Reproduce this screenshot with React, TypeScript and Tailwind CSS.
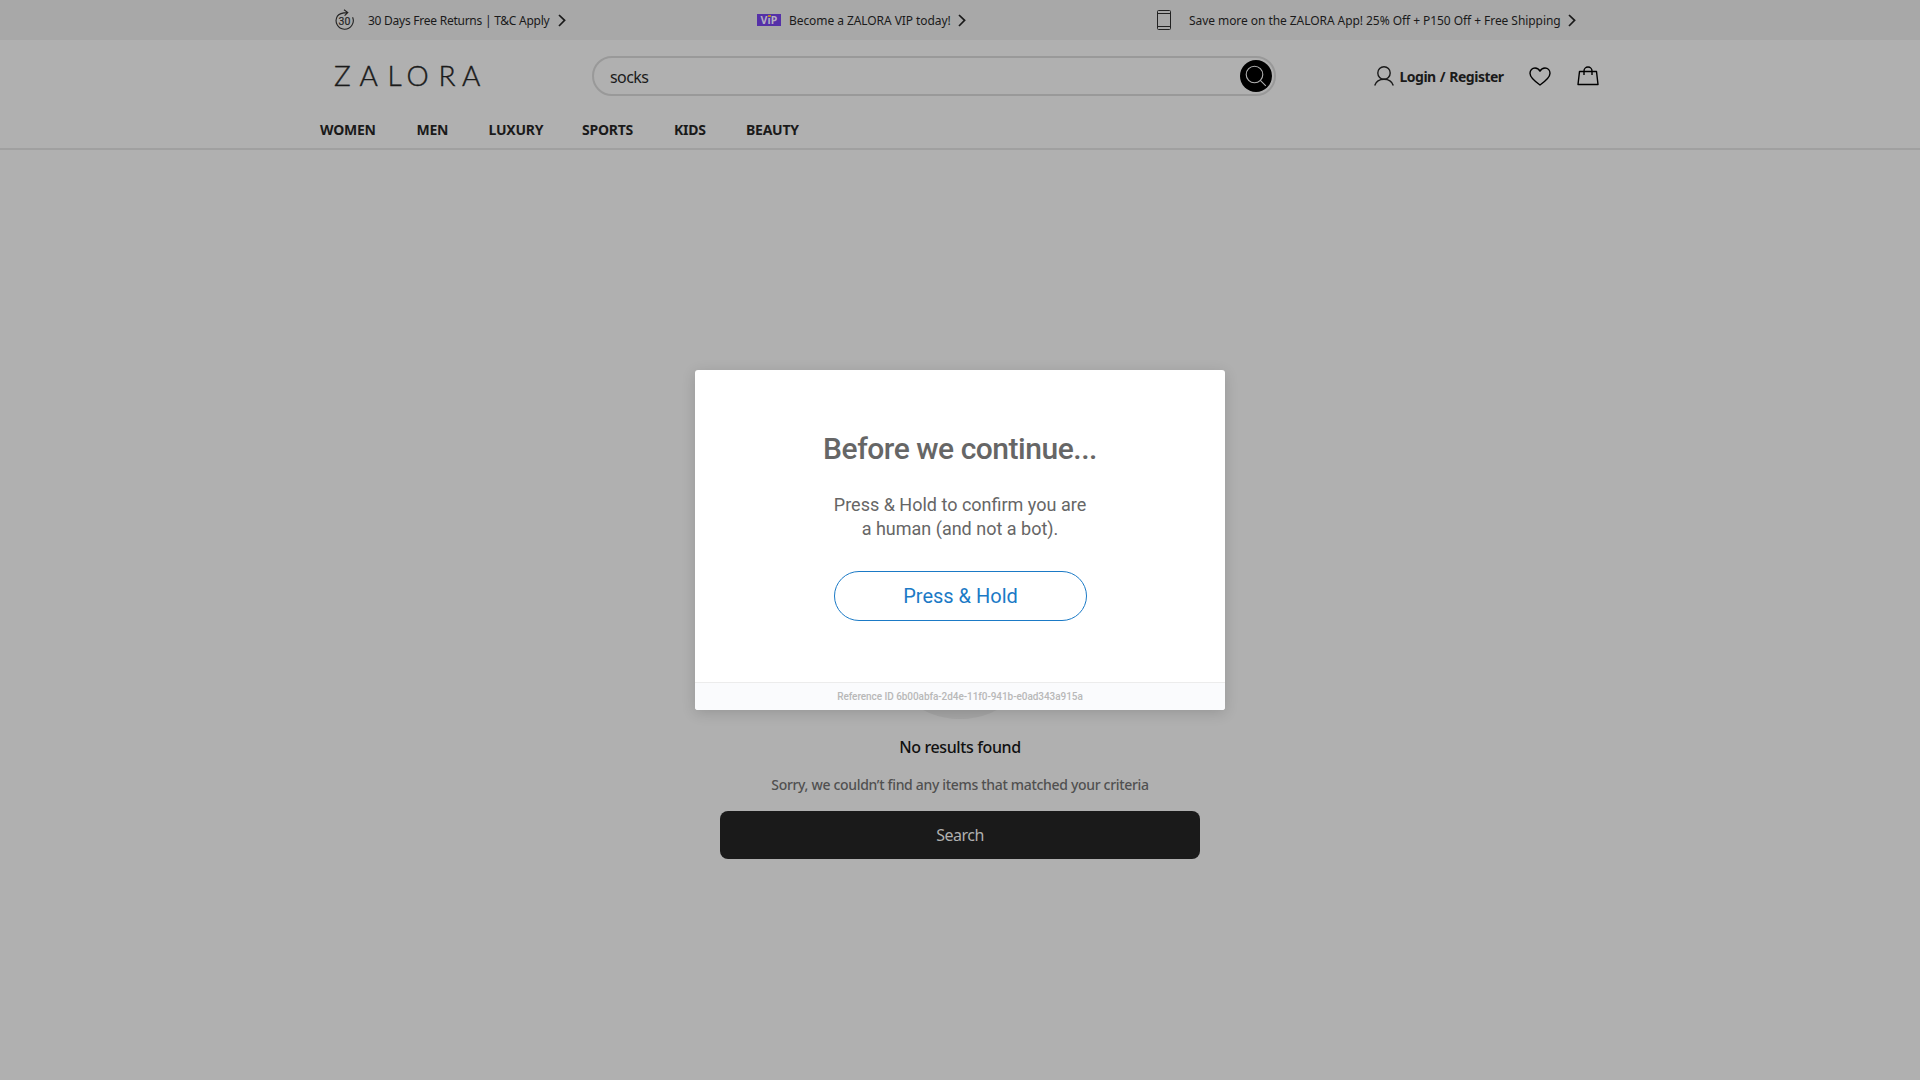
import React from "react";

const Chevron = () => (
  <svg width="8" height="13" viewBox="0 0 8 13" fill="none" stroke="#1a1a1a" strokeWidth="1.7" className="shrink-0">
    <path d="M1 1l5.6 5.3L1 12" />
  </svg>
);

const ReturnsIcon = () => (
  <svg width="20" height="22" viewBox="0 0 20 22" fill="none" stroke="#222" strokeWidth="1.1">
    <path d="M17.6 8.2A8.6 8.6 0 1 1 2.2 7.4C3.8 4.8 6.5 3.6 12.5 3.6M9 .7l3.8 2.9L9.6 6.6" />
    <text x="9.5" y="15.5" textAnchor="middle" fontSize="10.5" fill="#222" stroke="#222" strokeWidth="0.15" fontFamily="Roboto, sans-serif">30</text>
  </svg>
);

const nav = [
  { label: "WOMEN", box: "w-[96.5px]" },
  { label: "MEN", box: "w-[72px]" },
  { label: "LUXURY", box: "w-[93.5px]" },
  { label: "SPORTS", box: "w-[92px]" },
  { label: "KIDS", box: "w-[72px]" },
  { label: "BEAUTY", box: "w-[60px]" },
];

const TopBar = () => (
  <div className="h-10 bg-[#a8a8a8] text-[12px] text-[#1a1a1a] whitespace-nowrap">
    <div className="flex h-10 items-center pl-[335px]">
      <div className="flex w-[422px] items-center">
        <div className="w-[33px]"><ReturnsIcon /></div>
        <span className="w-[190px] pt-[2px] tracking-[-0.25px]">30 Days Free Returns | T&amp;C Apply</span>
        <Chevron />
      </div>
      <div className="flex w-[400px] items-center">
        <div className="mr-2 flex h-3 w-6 items-center justify-center bg-[#5530a8] text-[10.5px] font-bold leading-3 tracking-[0.2px] text-[#b5b0c0]">
          <span>V</span>
          <span className="relative">ı<i className="absolute left-[1px] top-[1px] h-[2px] w-[3px] bg-[#b08a28]" /></span>
          <span>P</span>
        </div>
        <span className="w-[169px] pt-[2px] tracking-[-0.07px]">Become a ZALORA VIP today!</span>
        <Chevron />
      </div>
      <svg width="14" height="20" viewBox="0 0 14 20" fill="none" stroke="#222" className="mr-[18px]">
        <rect x=".5" y=".5" width="13" height="19" rx="1" /><path d="M1 3.5h12M1 16.5h12" />
      </svg>
      <span className="w-[379px] pt-[2px] tracking-[-0.06px]">Save more on the ZALORA App! 25% Off + P150 Off + Free Shipping</span>
      <Chevron />
    </div>
  </div>
);

const Header = () => (
  <header className="h-[110px] border-b-2 border-[#a0a0a0] text-[#1a1a1a]">
    <div className="flex h-[72px] items-center pl-[334px]">
      <div className="flex h-8 w-[258px] items-center pb-[2px] font-[Lato] text-[28px] font-light leading-8 [-webkit-text-stroke:0.4px_#1a1a1a]">
        <span className="w-[25.5px]">Z</span><span className="w-[28px]">A</span><span className="w-[19px]">L</span>
        <span className="w-[32px]">O</span><span className="w-[23.5px]">R</span><span>A</span>
      </div>
      <div className="flex h-10 w-[684px] items-center justify-between rounded-full border-2 border-[#999] pl-4 pr-[2px]">
        <span className="pt-px text-[16px] tracking-[-0.55px]">socks</span>
        <span className="flex h-8 w-8 items-center justify-center rounded-full bg-black">
          <svg width="22" height="22" viewBox="0 0 22 22" fill="none" stroke="#b0b0b0" strokeWidth="1.1">
            <circle cx="9.5" cy="9.5" r="8.3" /><path d="M15.3 15.3l5.5 5.5" />
          </svg>
        </span>
      </div>
      <svg width="20" height="20" viewBox="0 0 20 20" fill="none" stroke="#1a1a1a" strokeWidth="1.4" className="ml-[98px] mr-[5.5px]">
        <circle cx="10" cy="7" r="6.2" /><path d="M.7 19.500C2 15.500 5.500 13.200 10 13.200s8 2.300 9.300 6.300" />
      </svg>
      <span className="w-[129.5px] whitespace-nowrap text-[14px] font-bold tracking-[-0.5px] [word-spacing:1px]">Login / Register</span>
      <svg width="22" height="19" viewBox="0 0 22 19" fill="none" stroke="#000" strokeWidth="1.4" strokeLinejoin="round">
        <path d="M11 18C6.500 14.800 1 11 1 6.300 1 3.200 3.200 1 6 1c2.200 0 4 1.200 5 3.200C12 2.200 13.800 1 16 1c2.800 0 5 2.200 5 5.300C21 11 15.500 14.800 11 18z" />
      </svg>
      <svg width="22" height="20" viewBox="0 0 22 20" fill="none" stroke="#000" strokeWidth="1.4" strokeLinejoin="round" className="ml-[26px]">
        <path d="M2.500 5.500h17L21 18.500H1zM7 9V5a4 4 0 0 1 8 0v4" />
      </svg>
    </div>
    <nav className="flex h-[34px] items-center pl-[320px] text-[14px] font-bold tracking-[-0.25px]">
      {nav.map((n) => <span key={n.label} className={n.box}>{n.label}</span>)}
    </nav>
  </header>
);

const Empty = () => (
  <main className="flex flex-col items-center pt-[409px]">
    <div className="h-40 w-40 rounded-full bg-[#a6a6a6]" />
    <h2 className="mt-[16px] text-[16px] font-medium leading-6 tracking-[-0.38px] text-[#111]">No results found</h2>
    <p className="mt-[14px] text-[14px] font-medium leading-6 tracking-[-0.32px] text-[#505050]">Sorry, we couldn’t find any items that matched your criteria</p>
    <button className="mt-[14px] h-12 w-[480px] rounded-lg bg-[#1a1a1a] text-[16px] tracking-[-0.5px] text-[#b0b0b0]">Search</button>
  </main>
);

const Modal = () => (
  <div className="absolute left-[695px] top-[370px] flex h-[340px] w-[530px] flex-col items-center overflow-hidden rounded-[3px] bg-white font-[Roboto] text-[#666] shadow-[0_3px_14px_rgba(0,0,0,0.15)]">
    <h1 className="mt-[59px] text-[30px] font-medium leading-10 tracking-[-0.47px]">Before we continue...</h1>
    <p className="mt-[24px] text-center text-[18px] leading-6">Press &amp; Hold to confirm you are<br />a human (and not a bot).</p>
    <button className="ml-px mt-[30px] h-[50px] w-[253px] shrink-0 rounded-full border border-[#1b7ac6] text-[20px] text-[#1b7ac6]">Press &amp; Hold</button>
    <div className="mt-auto flex h-7 w-full items-center justify-center border-t border-[#ececec] bg-[#fafbfd] text-[10px] font-medium tracking-[-0.06px] text-[#b8b8b8]">
      Reference ID 6b00abfa-2d4e-11f0-941b-e0ad343a915a
    </div>
  </div>
);

export default function App() {
  return (
    <div className="relative h-[1080px] w-[1920px] overflow-hidden bg-[#b0b0b0] font-['Noto_Sans',sans-serif]">
      <TopBar />
      <Header />
      <Empty />
      <Modal />
    </div>
  );
}
